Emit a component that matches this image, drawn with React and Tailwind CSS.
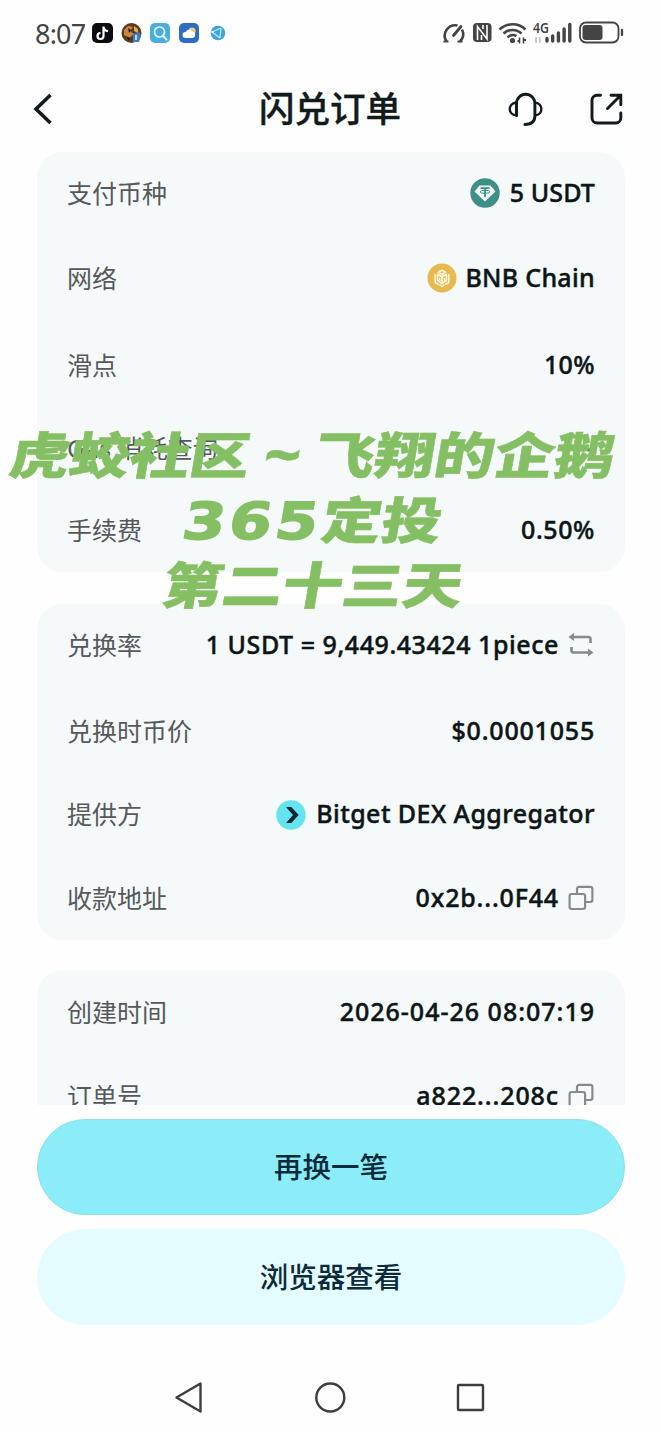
import React from 'react';

const TetherIcon = () => (
    <svg width="30" height="30" viewBox="0 0 30 30" className="mr-[10px]">
        <circle cx="15" cy="15" r="14.7" fill="#3f8f86" />
        <path d="M9.5 7.5h11L25.5 13.5 15 23.5 4.5 13.5z" fill="#f1fbfa" />
        <path d="M10.5 10.2h9M15 10.2v9" stroke="#3f8f86" strokeWidth="1.8" fill="none" />
        <ellipse cx="15" cy="13.8" rx="5" ry="1.5" stroke="#3f8f86" strokeWidth="1" fill="none" />
    </svg>
);

const BnbIcon = () => (
    <svg width="30" height="30" viewBox="0 0 30 30" className="mr-[8px]">
        <circle cx="15" cy="15" r="14.5" fill="#e7b94f" />
        <g fill="none" stroke="#fdf6dc" strokeWidth="1.6" strokeLinejoin="round" strokeLinecap="round">
            <path d="M11.5 9.3 15 7.2l3.5 2.1M8.2 11.5v8l3 1.8M21.8 11.5v8l-3 1.8M13 22l2 1.3 2-1.3" />
            <path d="M10.5 11.3 15 13.8l4.5-2.5v6.2L15 20.2l-4.5-2.7z" />
            <path d="M15 14v6" />
            <path d="M12.5 15.2v2M17.5 15.2v2M13 10.3l2 1 2-1" />
        </g>
    </svg>
);

const BitgetIcon = () => (
    <svg width="30" height="30" viewBox="0 0 30 30" className="mr-[10px]">
        <circle cx="15" cy="15" r="14.7" fill="#63e4ee" />
        <path d="M10 7h5.3l7.4 8-7.4 8H10l7-8z" fill="#0a2438" />
    </svg>
);

const SwapIcon = () => (
    <svg width="26" height="26" viewBox="0 0 26 26" className="mr-[1px] ml-[9px]" fill="none" stroke="#858b8d" strokeWidth="2.6" strokeLinejoin="round">
        <path d="M3 5h17.500a2 2 0 0 1 2 2V11M23 20.500H5.500a2 2 0 0 1-2-2V15" />
        <path d="M.5 5 6 1v8zM25.500 20.500l-5.500-4v8z" fill="#858b8d" stroke="none" />
    </svg>
);

const CopyIcon = () => (
    <svg width="26" height="26" viewBox="0 0 26 26" className="mr-[1px] ml-[9px]" fill="none" stroke="#858b8d" strokeWidth="2.2">
        <rect x="1.6" y="9" width="15.5" height="15" rx="2.2" />
        <path d="M9 9V4a2.2 2.2 0 0 1 2.2-2.2h11A2.2 2.2 0 0 1 24.4 4v10.800a2.200 2.200 0 0 1-2.200 2.200H17" />
    </svg>
);

const payRows = [
    { label: '支付币种', value: '5 USDT', icon: <TetherIcon />, height: 'h-[82px]', tracking: 'tracking-[0.1px]' },
    { label: '网络', value: 'BNB Chain', icon: <BnbIcon />, height: 'h-[88px]', tracking: 'tracking-[0.3px]' },
    { label: '滑点', value: '10%', height: 'h-[86px]', tracking: 'tracking-[0.4px]' },
    { label: 'Gas 消耗查询', value: '--', height: 'h-[80px]', tracking: 'tracking-[0.5px]' },
    { label: '手续费', value: '0.50%', height: 'h-[84px]', tracking: 'tracking-[0.6px]' },
];

const rateRows = [
    { label: '兑换率', value: '1 USDT = 9,449.43424 1piece', after: <SwapIcon />, height: 'h-[82px]', tracking: 'tracking-[0.56px]' },
    { label: '兑换时币价', value: '$0.0001055', height: 'h-[91px]', tracking: 'tracking-[0.8px]' },
    { label: '提供方', value: 'Bitget DEX Aggregator', icon: <BitgetIcon />, height: 'h-[75px]', tracking: 'tracking-[0.440px]' },
    { label: '收款地址', value: '0x2b...0F44', after: <CopyIcon />, height: 'h-[92px]', tracking: 'tracking-[0.84px]' },
];

const orderRows = [
    { label: '创建时间', value: '2026-04-26 08:07:19', height: 'h-[84px]', tracking: 'tracking-[1px]' },
    { label: '订单号', value: 'a822...208c', after: <CopyIcon />, height: 'h-[84px]', tracking: 'tracking-[0.9px]' },
];

const Card = ({ rows, className }) => (
    <div className={`mr-[35px] ml-[37px] shrink-0 rounded-[26px] bg-[#f5f9fa] px-[30px] ${className}`}>
        {rows.map((row) => (
            <div key={row.label} className={`flex items-center justify-between whitespace-nowrap ${row.height}`}>
                <span className="text-[25px] leading-none text-[#55595b]">{row.label}</span>
                <span className="flex items-center text-[25px] leading-none font-medium text-[#0c1517]">
                    {row.icon}
                    <span className={`pb-[2px] [-webkit-text-stroke:0.450px_#0c1517] ${row.tracking}`}>{row.value}</span>
                    {row.after}
                </span>
            </div>
        ))}
    </div>
);

const StatusBar = () => (
    <div className="flex h-[66px] shrink-0 items-center justify-between pr-[36px] pl-[35px] text-[#444]">
        <div className="flex items-center">
            <span className="w-[57px] text-[27px] leading-none tracking-[-0.8px]">8:07</span>
            <svg width="136" height="22" viewBox="0 0 136 22">
                <rect x="0" y="1" width="21" height="20" rx="5" fill="#0b0b12" />
                <path d="M11.500 4.500v9.500a3 3 0 1 1-3-3M11.500 5c.5 2.500 2 4 4.500 4.200" fill="none" stroke="#fff" strokeWidth="2.200" />
                <circle cx="39.500" cy="11" r="10" fill="#5b3a20" />
                <path d="M32 8l4-4 5 1-3 4 4 3-5 4-5-3z" fill="#c78a3c" />
                <path d="M42 4l4 3v4l-4-2z" fill="#e0aa55" />
                <path d="M36 6l3 2-2 3zM34 14l4 2-1 3z" fill="#241a18" />
                <path d="M41 12l6-2 2 4-2 6h-6z" fill="#3c7fc6" />
                <path d="M44 13v5" stroke="#e8f6ff" strokeWidth="1.500" />
                <rect x="58" y="1" width="20" height="20" rx="5" fill="#4aade0" />
                <circle cx="67.500" cy="10" r="5" fill="none" stroke="#e9fbff" strokeWidth="1.700" />
                <path d="M71 13.800l3.500 3.700" stroke="#e9fbff" strokeWidth="1.900" strokeLinecap="round" />
                <rect x="87" y="1" width="20" height="20" rx="5" fill="#2d6cc4" />
                <circle cx="100" cy="9" r="3.600" fill="#f3cc70" />
                <path d="M93.500 16a3 3 0 0 1 0-6 4 4 0 0 1 7-.5 3.300 3.300 0 0 1 0 6.500z" fill="#fff" />
                <circle cx="126" cy="11" r="7.300" fill="#3fa3dc" />
                <path d="M120 10l9-4M120 10l8 6M129 6l-1 10" stroke="#bfeaff" strokeWidth="1.300" />
                <circle cx="120.500" cy="10" r="1.300" fill="#e4f7ff" />
            </svg>
        </div>
        <svg width="184" height="26" viewBox="440 20 184 26" fill="none" stroke="#444">
            <path d="M446.500 41.500a10.500 10.500 0 0 1 11-16M462 29.500a10.500 10.500 0 0 1-2 12" strokeWidth="2.600" />
            <path d="M453.500 35.500l7.500-9" strokeWidth="2.800" strokeLinecap="round" />
            <path d="M443.500 41.500h5M457.500 41.500h5" strokeWidth="2" />
            <rect x="473" y="23" width="18.500" height="19" rx="4" fill="#444" stroke="none" />
            <path d="M477.500 40V26.500l9.500 12.500V25M481.500 40v-5M483 25v4" stroke="#fff" strokeWidth="1.600" />
            <path d="M499.500 29.500a19 19 0 0 1 26 0M503.500 33.500a13 13 0 0 1 18 0M507.500 37.500a7.500 7.500 0 0 1 9 -1.500" strokeWidth="2.500" />
            <circle cx="512.500" cy="40.500" r="2.600" fill="#444" stroke="none" />
            <path d="M519.500 37.500v6M523.500 37.500v6" strokeWidth="1.600" />
            <path d="M517.500 41h2M523.500 40h2.500" strokeWidth="1.800" />
            <text x="533" y="33" fontSize="14" fontWeight="600" fill="#444" stroke="none" textLength="16" lengthAdjust="spacingAndGlyphs">4G</text>
            <path d="M536 37v6M540 37v6" stroke="#b9b9b9" strokeWidth="1.400" />
            <path d="M547 41v-2.500M552.700 41v-5M558.400 41v-8M564.100 41v-12M569.800 41V24.500" strokeWidth="3.400" strokeLinecap="round" />
            <rect x="580" y="22.500" width="38.500" height="20" rx="6" strokeWidth="1.800" />
            <rect x="582.500" y="25" width="20" height="15" rx="3" fill="#444" stroke="none" />
            <path d="M622 30v5" strokeWidth="2.300" strokeLinecap="round" />
        </svg>
    </div>
);

const Header = () => (
    <div className="grid h-[86px] shrink-0 grid-cols-[180px_1fr_180px] items-center px-[30px] text-[#111a1c]">
        <svg width="26" height="34" viewBox="0 0 26 34" fill="none" stroke="currentColor" strokeWidth="3.600">
            <path d="M20.500 3 6 17l14.500 14" />
        </svg>
        <h1 className="text-center text-[35.500px] leading-none font-medium [-webkit-text-stroke:0.400px_#111a1c]">闪兑订单</h1>
        <svg width="116" height="36" viewBox="508 91 116 36" className="mr-[6px] justify-self-end" fill="none" stroke="currentColor" strokeWidth="2.900" strokeLinecap="round">
            <path d="M516.500 115.500v-12a9.200 9.200 0 0 1 18.400 0v12.500q0 8.200-10 8.500" />
            <path d="M516.500 102.500c-9 1-9 12 0 13zM535 102.500c8.500 1 8.500 12 0 13" strokeWidth="2.400" />
            <path d="M600.500 95.200H597a5 5 0 0 0-5 5V118a5 5 0 0 0 5 5h18.800a5 5 0 0 0 5-5v-5" />
            <path d="M611 95.200h9.800v9.500M620 96l-12.500 12.500" />
        </svg>
    </div>
);

const Watermark = () => (
    <div className="pointer-events-none absolute top-[421px] left-0 flex w-[625px] flex-col items-center text-[50px] leading-[65px] font-black whitespace-nowrap text-[#84c063] [-webkit-text-stroke:0.500px_#84c063]">
        <p className="scale-x-[1.200] -skew-x-[8deg]">
            虎蛟社区<span className="inline-block w-[54px] text-center font-['Noto_Sans'] text-[53px]">~</span>飞翔的企鹅
        </p>
        <p className="scale-x-[1.200] -skew-x-[8deg]">
            <span className="font-['DejaVu_Sans'] text-[51px] leading-none tracking-[3px] [-webkit-text-stroke:1.500px_#84c063]">365</span>定投
        </p>
        <p className="scale-x-[1.200] -skew-x-[8deg]">第二十三天</p>
    </div>
);

const NavigationBar = () => (
    <div className="flex grow items-center justify-center pt-[38px]">
        <svg width="312" height="34" viewBox="174.500 1381 312 34" fill="none" stroke="#3d3d3d" strokeWidth="2.400" strokeLinejoin="round">
            <path d="M177 1397.500l24-14v28z" />
            <circle cx="330.800" cy="1397.500" r="14" />
            <rect x="458.500" y="1385" width="25" height="25" rx="1" />
        </svg>
    </div>
);

const App = () => {
    return (
        <main className="relative flex h-[1432px] w-[660px] flex-col overflow-hidden bg-[#fefefe] font-['Noto_Sans','Noto_Sans_CJK_SC',sans-serif]">
            <StatusBar />
            <Header />
            <div className="flex h-[953px] shrink-0 flex-col overflow-hidden">
                <Card rows={payRows} className="h-[420px]" />
                <Card rows={rateRows} className="mt-[32px] h-[336px]" />
                <Card rows={orderRows} className="mt-[30px] h-[180px]" />
            </div>
            <div className="mt-[14px] flex shrink-0 flex-col gap-[14px] pr-[35px] pl-[37px]">
                <button className="h-[96px] rounded-full border border-[#8fdfe6] bg-[#8aedf8] text-[28.500px] font-medium text-[#0b2b3a]">再换一笔</button>
                <button className="h-[96px] rounded-full bg-[#e4fcff] text-[28.500px] font-medium text-[#0b2b3a]">浏览器查看</button>
            </div>
            <NavigationBar />
            <Watermark />
        </main>
    );
};

export default App;
